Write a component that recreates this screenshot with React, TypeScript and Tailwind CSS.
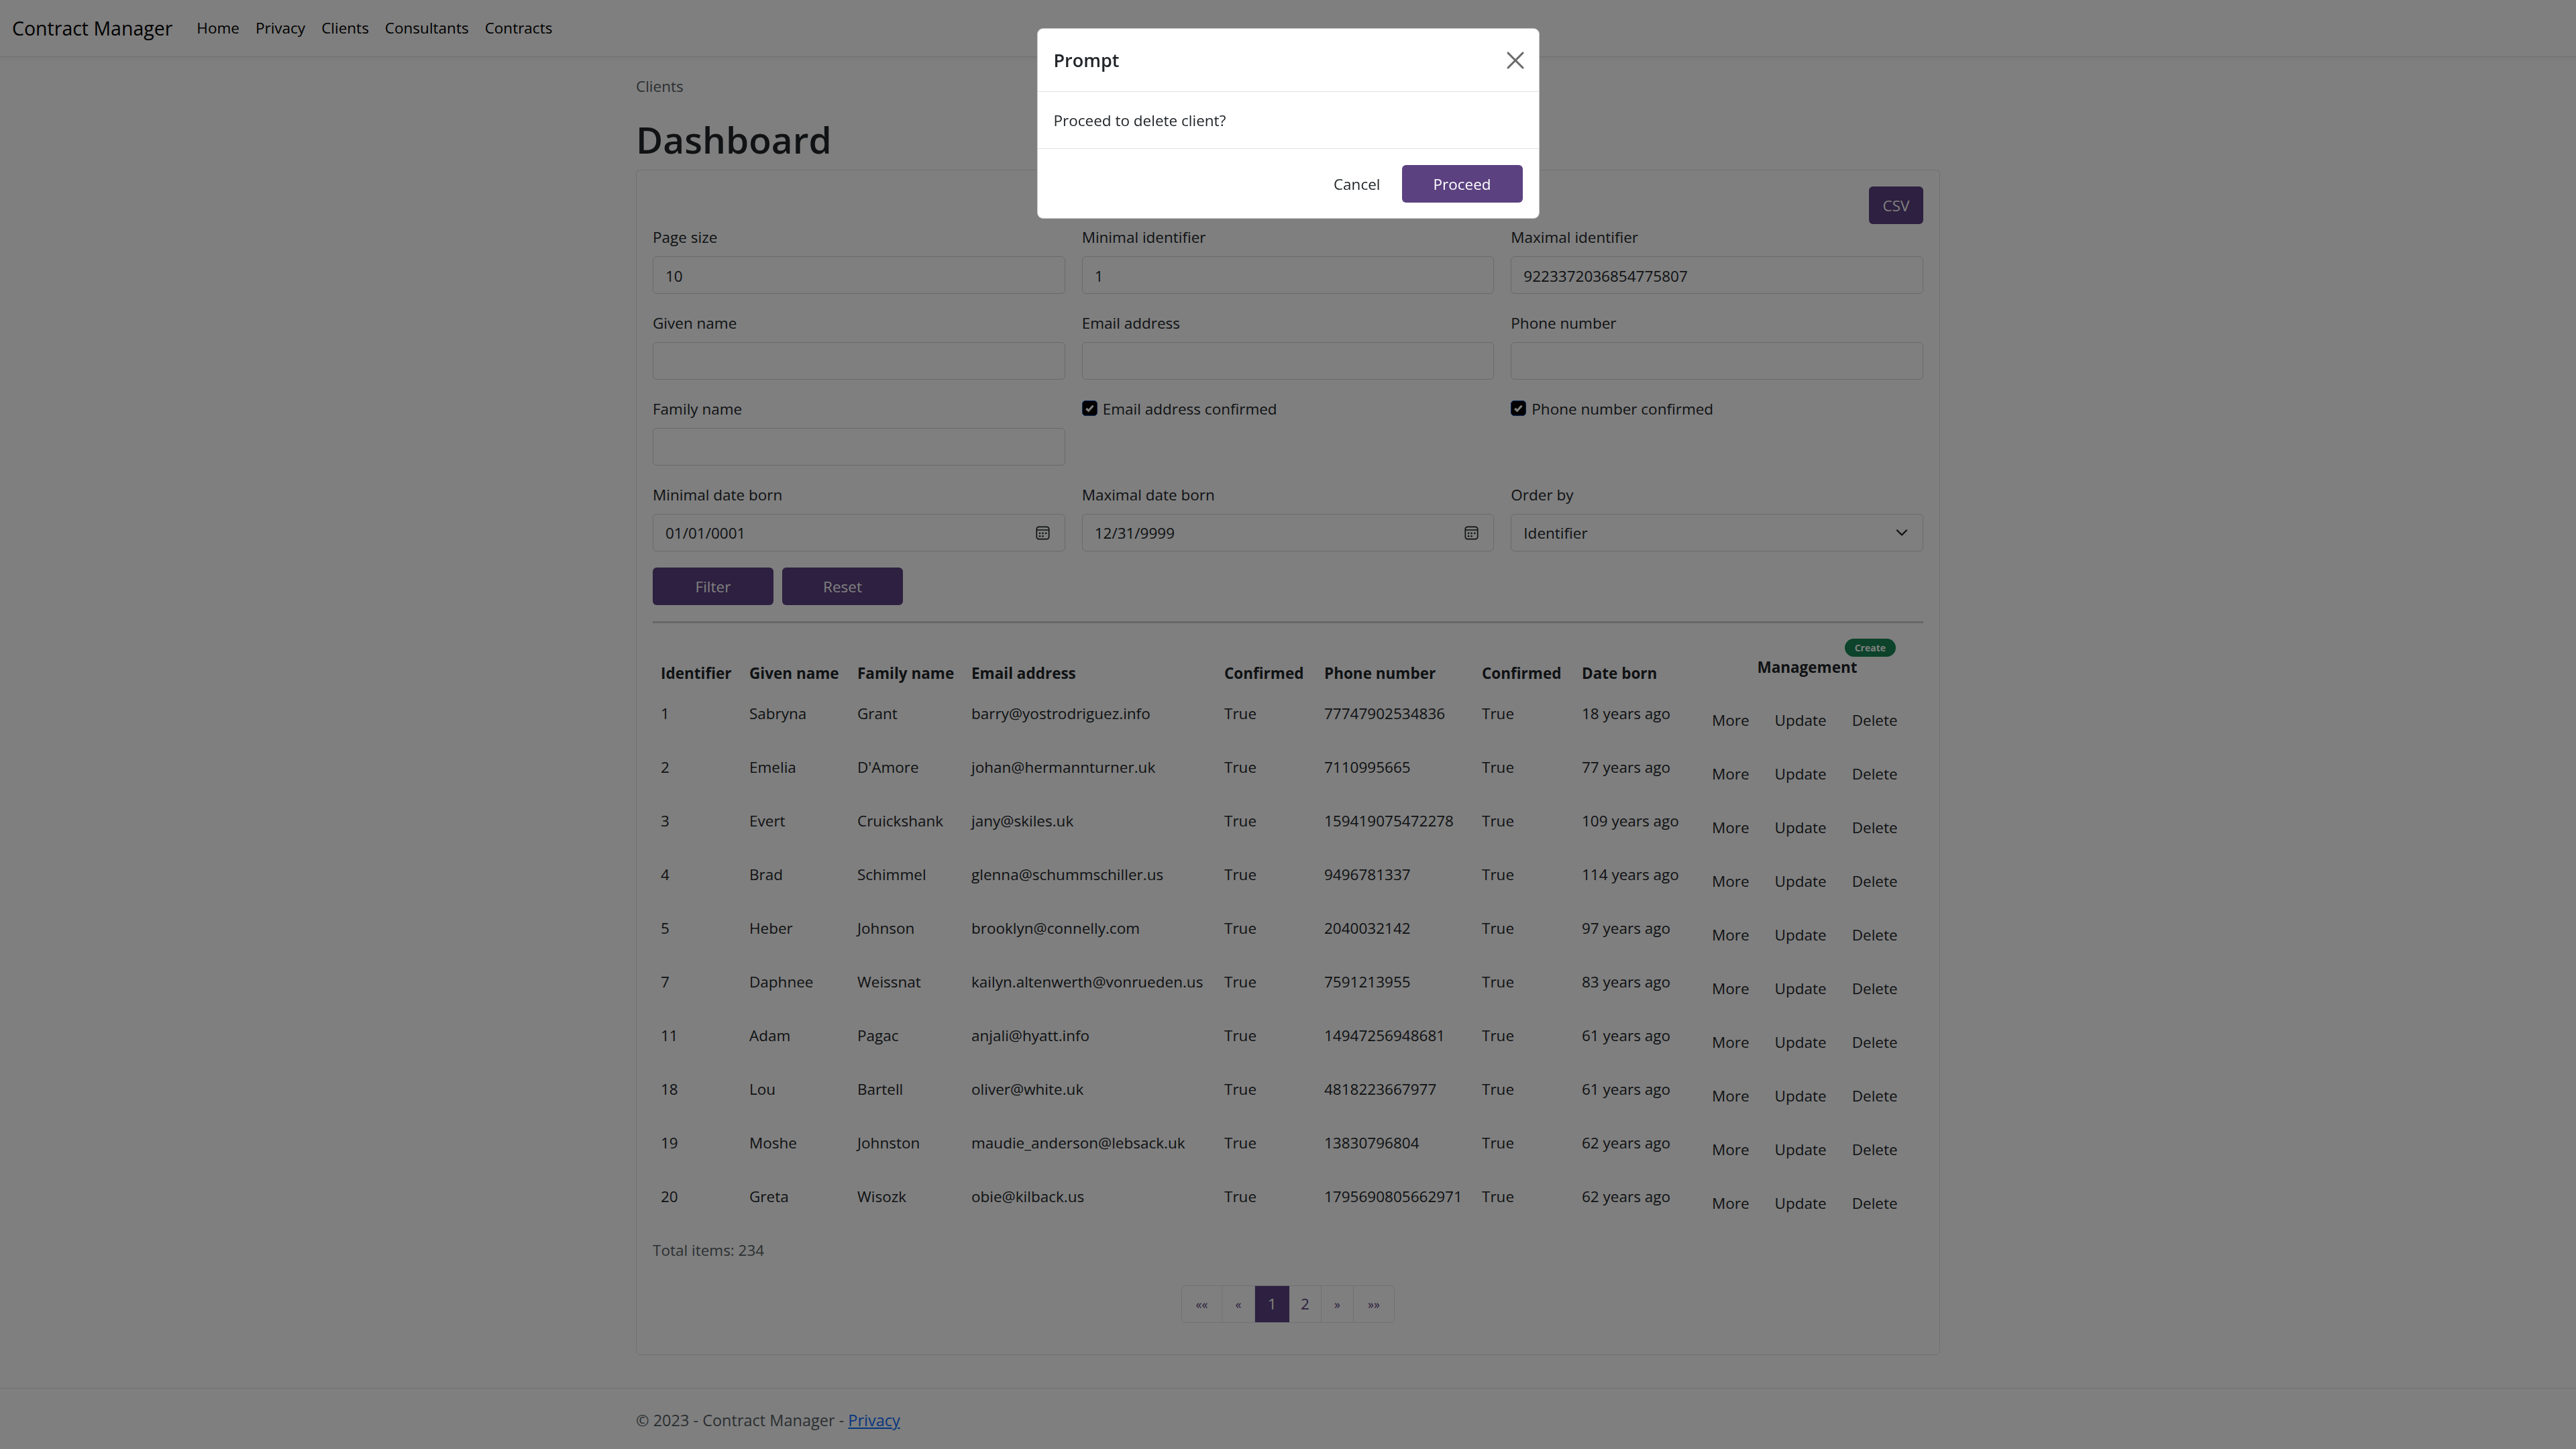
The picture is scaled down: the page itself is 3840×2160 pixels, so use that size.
import { ChevronDown, X } from 'lucide-react';

const clients = [
  ['1', 'Sabryna', 'Grant', 'barry@yostrodriguez.info', '77747902534836', '18 years ago'],
  ['2', 'Emelia', "D'Amore", 'johan@hermannturner.uk', '7110995665', '77 years ago'],
  ['3', 'Evert', 'Cruickshank', 'jany@skiles.uk', '159419075472278', '109 years ago'],
  ['4', 'Brad', 'Schimmel', 'glenna@schummschiller.us', '9496781337', '114 years ago'],
  ['5', 'Heber', 'Johnson', 'brooklyn@connelly.com', '2040032142', '97 years ago'],
  ['7', 'Daphnee', 'Weissnat', 'kailyn.altenwerth@vonrueden.us', '7591213955', '83 years ago'],
  ['11', 'Adam', 'Pagac', 'anjali@hyatt.info', '14947256948681', '61 years ago'],
  ['18', 'Lou', 'Bartell', 'oliver@white.uk', '4818223667977', '61 years ago'],
  ['19', 'Moshe', 'Johnston', 'maudie_anderson@lebsack.uk', '13830796804', '62 years ago'],
  ['20', 'Greta', 'Wisozk', 'obie@kilback.us', '1795690805662971', '62 years ago'],
];

const navLinks = ['Home', 'Privacy', 'Clients', 'Consultants', 'Contracts'];
const headers = ['Identifier', 'Given name', 'Family name', 'Email address', 'Confirmed', 'Phone number', 'Confirmed', 'Date born'];

function CalendarIcon() {
  return (
    <svg className="w-[21px] h-[21px] text-[#212529]" viewBox="0 0 16 16" fill="none" stroke="currentColor">
      <rect x="1" y="1" width="14" height="14" rx="2.5" strokeWidth="1.3" />
      <path d="M1.5 4.6h13" strokeWidth="1.2" />
      <g fill="currentColor" stroke="none">
        <circle cx="4.6" cy="8.3" r="1" />
        <circle cx="8" cy="8.3" r="1" />
        <circle cx="11.6" cy="8.3" r="1" />
        <circle cx="4.6" cy="11.6" r="1" />
        <circle cx="8" cy="11.6" r="1" />
      </g>
    </svg>
  );
}

function Field({ label, value = '' }: { label: string; value?: string }) {
  return (
    <div>
      <label className="block h-[32px] mb-[12px]">{label}</label>
      <input
        readOnly
        value={value}
        className="w-full h-[56px] px-[18px] pt-[2px] border border-[#ced4da] rounded-[6px] bg-white outline-none"
      />
    </div>
  );
}

function DateField({ label, value }: { label: string; value: string }) {
  return (
    <div>
      <label className="block h-[32px] mb-[12px]">{label}</label>
      <div className="flex items-center justify-between h-[56px] pl-[18px] pr-[22px] border border-[#ced4da] rounded-[6px] bg-white">
        <span className="pt-[2px]">{value}</span>
        <CalendarIcon />
      </div>
    </div>
  );
}

function Check({ label }: { label: string }) {
  return (
    <div className="flex items-center h-[32px] gap-[8px]">
      <span className="flex items-center justify-center w-[23px] h-[23px] -mt-[3px] rounded-[5px] bg-black border border-[#0b4fb0]">
        <svg className="w-[17px] h-[17px]" viewBox="0 0 16 16" fill="none" stroke="white" strokeWidth="3">
          <path d="M3 8.5l3.2 3 6.5-7" />
        </svg>
      </span>
      <span>{label}</span>
    </div>
  );
}

const purpleBtn = 'flex items-center justify-center h-[56px] pt-[2px] rounded-[6px] bg-[#5b4180] text-white';

export default function App() {
  return (
    <div
      className="relative flex flex-col h-[2160px] overflow-hidden bg-white text-[#212529] text-[22.5px] leading-[32px]"
      style={{ fontFamily: '"Open Sans", "Liberation Sans", sans-serif' }}
    >
      {/* Navbar */}
      <nav className="flex items-center h-[85px] pl-[18px] border-b border-[#dee2e6] shadow-[0_3px_9px_rgba(0,0,0,0.05)]">
        <span className="text-[28.5px] mr-[36px] text-black">Contract Manager</span>
        <div className="flex gap-[24px] text-black">
          {navLinks.map((link) => (
            <span key={link}>{link}</span>
          ))}
        </div>
      </nav>

      {/* Main content */}
      <main className="w-[1944px] mx-auto">
        <div className="mt-[28px] h-[32px] text-[#565e64]">Clients</div>
        <h1 className="mt-[22px] mb-[4px] h-[82px] text-[55px] leading-[82px] font-semibold">Dashboard</h1>

        <div className="h-[1767px] px-[24px] pt-[24px] border border-[#dfe0e1] rounded-[6px]">
          <div className="flex justify-end">
            <button className={`${purpleBtn} w-[81px]`}>CSV</button>
          </div>
          <div className="grid grid-cols-3 gap-x-[25px] gap-y-[28px] mt-[4px]">
            <Field label="Page size" value="10" />
            <Field label="Minimal identifier" value="1" />
            <Field label="Maximal identifier" value="9223372036854775807" />
            <Field label="Given name" />
            <Field label="Email address" />
            <Field label="Phone number" />
            <Field label="Family name" />
            <Check label="Email address confirmed" />
            <Check label="Phone number confirmed" />
            <DateField label="Minimal date born" value="01/01/0001" />
            <DateField label="Maximal date born" value="12/31/9999" />
            <div>
              <label className="block h-[32px] mb-[12px]">Order by</label>
              <div className="flex items-center justify-between h-[56px] px-[18px] border border-[#ced4da] rounded-[6px] bg-white">
                <span className="pt-[2px]">Identifier</span>
                <ChevronDown className="w-[28px] h-[28px] -mr-[1px]" strokeWidth={2} />
              </div>
            </div>
          </div>

          <div className="flex gap-[13px] mt-[24px]">
            <button className={`${purpleBtn} w-[180px]`}>Filter</button>
            <button className={`${purpleBtn} w-[180px]`}>Reset</button>
          </div>

          <hr className="mt-[24px] mb-[19px] border-0 border-t-[3px] border-[#cfcfcf]" />

          <table className="w-[1895px] table-fixed border-collapse">
            <colgroup>
              <col className="w-[132px]" />
              <col className="w-[161px]" />
              <col className="w-[170px]" />
              <col className="w-[377px]" />
              <col className="w-[149px]" />
              <col className="w-[235px]" />
              <col className="w-[149px]" />
              <col className="w-[194px]" />
              <col />
            </colgroup>
            <thead>
              <tr className="h-[86px]">
                {headers.map((h, i) => (
                  <th key={i} className="px-[12px] pb-[14px] text-left align-bottom font-bold whitespace-nowrap">
                    {h}
                  </th>
                ))}
                <th className="pt-[4px] align-top font-bold">
                  <div className="flex justify-end pr-[42px]">
                    <span className="flex items-center h-[27px] px-[15px] rounded-full bg-[#198754] text-white text-[14px] font-bold">
                      Create
                    </span>
                  </div>
                  <div className="h-[32px] pr-[20px]">Management</div>
                </th>
              </tr>
            </thead>
            <tbody>
              {clients.map((c) => (
                <tr key={c[0]} className="h-[80px]">
                  <td className="px-[12px] pt-[14px] align-top">{c[0]}</td>
                  <td className="px-[12px] pt-[14px] align-top">{c[1]}</td>
                  <td className="px-[12px] pt-[14px] align-top">{c[2]}</td>
                  <td className="px-[12px] pt-[14px] align-top whitespace-nowrap">{c[3]}</td>
                  <td className="px-[12px] pt-[14px] align-top">True</td>
                  <td className="px-[12px] pt-[14px] align-top whitespace-nowrap">{c[4]}</td>
                  <td className="px-[12px] pt-[14px] align-top">True</td>
                  <td className="px-[12px] pt-[14px] align-top whitespace-nowrap">{c[5]}</td>
                  <td className="px-[12px] pt-[12px] align-top">
                    <div className="flex items-center h-[56px] gap-[38px]">
                      <span>More</span>
                      <span>Update</span>
                      <span>Delete</span>
                    </div>
                  </td>
                </tr>
              ))}
            </tbody>
          </table>

          <div className="mt-[14px] h-[32px] text-[#565e64]">Total items: 234</div>

          <div className="flex justify-center mt-[36px]">
            <div className="flex h-[56px] border border-[#dee2e6] rounded-[6px] text-[#5b4180]">
              <span className="flex items-center justify-center w-[60px] border-r border-[#dee2e6] text-[18px]">««</span>
              <span className="flex items-center justify-center w-[49px] border-r border-[#dee2e6] text-[18px]">«</span>
              <span className="flex items-center justify-center w-[51px] bg-[#5b4180] text-white">1</span>
              <span className="flex items-center justify-center w-[48px] border-r border-[#dee2e6]">2</span>
              <span className="flex items-center justify-center w-[48px] border-r border-[#dee2e6] text-[18px]">»</span>
              <span className="flex items-center justify-center w-[60px] text-[18px]">»»</span>
            </div>
          </div>
        </div>
      </main>

      {/* Footer */}
      <footer className="mt-auto h-[91px] border-t border-[#dee2e6]">
        <div className="w-[1944px] mx-auto pt-[31px] text-[23.5px] text-[#565e64]">
          © 2023 - Contract Manager - <a className="text-[#0d6efd] underline">Privacy</a>
        </div>
      </footer>

      {/* Prompt modal */}
      <div className="fixed inset-0 flex justify-center bg-black/50">
        <div className="mt-[42px] self-start w-[749px] h-[284px] rounded-[9px] bg-white border border-black/20">
          <div className="flex items-center justify-between h-[94px] px-[24px] border-b border-[#dee2e6]">
            <span className="text-[27px] font-semibold">Prompt</span>
            <X className="w-[44px] h-[44px] -mr-[11px] text-[#6b6b6b]" strokeWidth={1.7} />
          </div>
          <div className="flex items-center h-[85px] px-[24px] border-b border-[#dee2e6]">
            <span className="pt-[2px]">Proceed to delete client?</span>
          </div>
          <div className="flex items-center justify-end gap-[32px] h-[103px] px-[24px]">
            <span className="pt-[2px]">Cancel</span>
            <button className={`${purpleBtn} w-[180px]`}>Proceed</button>
          </div>
        </div>
      </div>
    </div>
  );
}
